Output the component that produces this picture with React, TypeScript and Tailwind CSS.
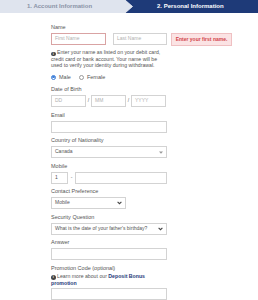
import React from "react"

const font = { fontFamily: '"Liberation Sans", Arial, sans-serif' }

function Label({ children }: { children: React.ReactNode }) {
  return <div className="h-[7px] mb-[2px] text-[5.5px] leading-[7px] text-[#555]">{children}</div>
}

function Box({ placeholder, value, w = "w-[116px]", error }: { placeholder?: string; value?: string; w?: string; error?: boolean }) {
  return (
    <div
      className={`${w} h-[12px] shrink-0 border ${error ? "border-[#d9a3a3]" : "border-[#d3d3d3]"} bg-white flex items-center px-[3px] text-[5px] ${value ? "text-[#555]" : "text-[#b0b0b0]"}`}
    >
      {value ?? placeholder}
    </div>
  )
}

function Select({ value, w = "w-[116px]", caret = "bold" }: { value: string; w?: string; caret?: "thin" | "bold" }) {
  return (
    <div className={`${w} h-[12px] border border-[#d3d3d3] bg-white flex items-center justify-between pl-[3px] pr-[3px] text-[5px] text-[#555]`}>
      <span>{value}</span>
      {caret === "thin" ? (
        <svg width="4" height="3" viewBox="0 0 4 3"><path d="M0 0.5h4L2 2.8z" fill="#999" /></svg>
      ) : (
        <svg width="5" height="4" viewBox="0 0 5 4"><path d="M0.6 0.8l1.9 1.9 1.9-1.9" stroke="#444" strokeWidth="1.1" fill="none" /></svg>
      )}
    </div>
  )
}

function InfoIcon() {
  return (
    <span className="inline-flex w-[4.5px] h-[4.5px] rounded-full bg-[#444] text-white text-[3.5px] leading-[4.5px] font-bold justify-center mr-[1.5px] align-[-0.5px]">
      i
    </span>
  )
}

function Group({ label, children }: { label: string; children: React.ReactNode }) {
  return (
    <div className="mt-[4.5px]">
      <Label>{label}</Label>
      {children}
    </div>
  )
}

export default function App() {
  return (
    <div style={font} className="w-[258px] h-[300px] overflow-hidden bg-white">
      {/* step header */}
      <div className="flex h-[13px] w-full">
        <div className="w-[124px] bg-[#dfe4ee] flex items-center pl-[27px] text-[6px] font-bold text-[#8a93a6]">
          1. Account Information
        </div>
        <svg width="10" height="13" viewBox="0 0 10 13" className="shrink-0 block">
          <rect width="10" height="13" fill="#1e3a78" />
          <path d="M0 0h1L8.5 6.5 1 13H0z" fill="#dfe4ee" />
          <path d="M1 0L8.5 6.5 1 13" stroke="#f4f6fa" strokeWidth="0.8" fill="none" />
        </svg>
        <div className="flex-1 bg-[#1e3a78] flex items-center pl-[23px] text-[6px] font-bold text-white">
          2. Personal Information
        </div>
      </div>

      <div className="pl-[51px] pt-[11px]">
        <Label>Name</Label>
        <div className="flex items-start">
          <Box placeholder="First Name" w="w-[55px]" error />
          <div className="ml-[7px]">
            <Box placeholder="Last Name" w="w-[54px]" />
          </div>
          <div className="ml-[4px] w-[61px] h-[13px] bg-[#fbe3e4] border border-[#efc0c2] flex items-center justify-center text-[5px] font-bold text-[#d2434a]">
            Enter your first name.
          </div>
        </div>
        <div className="mt-[3px] text-[5.2px] leading-[6px] text-[#555] whitespace-nowrap">
          <InfoIcon />Enter your name as listed on your debit card,
          <br />
          credit card or bank account. Your name will be
          <br />
          used to verify your identity during withdrawal.
        </div>

        <div className="mt-[5px] h-[8px] flex items-center text-[5.5px] text-[#555]">
          <span className="w-[5px] h-[5px] rounded-full border border-[#3b7dd8] flex items-center justify-center mr-[3px]">
            <span className="w-[2.5px] h-[2.5px] rounded-full bg-[#3b7dd8]" />
          </span>
          Male
          <span className="ml-[8px] w-[5px] h-[5px] rounded-full border border-[#999] mr-[3px]" />
          Female
        </div>

        <div className="mt-[5px]">
          <Label>Date of Birth</Label>
          <div className="flex items-center text-[5px] text-[#666]">
            <Box placeholder="DD" w="w-[35px]" />
            <span className="w-[5px] text-center">/</span>
            <Box placeholder="MM" w="w-[35px]" />
            <span className="w-[5px] text-center">/</span>
            <Box placeholder="YYYY" w="w-[35px]" />
          </div>
        </div>

        <Group label="Email">
          <Box />
        </Group>

        <Group label="Country of Nationality">
          <Select value="Canada" caret="thin" />
        </Group>

        <Group label="Mobile">
          <div className="flex items-center">
            <Box value="1" w="w-[17px]" />
            <span className="w-[7px] text-center text-[5px] text-[#666]">-</span>
            <Box w="w-[92px]" />
          </div>
        </Group>

        <Group label="Contact Preference">
          <Select value="Mobile" w="w-[75px]" />
        </Group>

        <Group label="Security Question">
          <Select value="What is the date of your father's birthday?" />
        </Group>

        <Group label="Answer">
          <Box />
        </Group>

        <Group label="Promotion Code (optional)">
          <div className="-mt-[1px] mb-[2px] text-[5.2px] leading-[6px] text-[#555] whitespace-nowrap">
            <InfoIcon />Learn more about our <span className="font-bold text-[#1e3a78]">Deposit Bonus</span>
            <br />
            <span className="font-bold text-[#1e3a78]">promotion</span>
          </div>
          <Box />
        </Group>
      </div>
    </div>
  )
}
